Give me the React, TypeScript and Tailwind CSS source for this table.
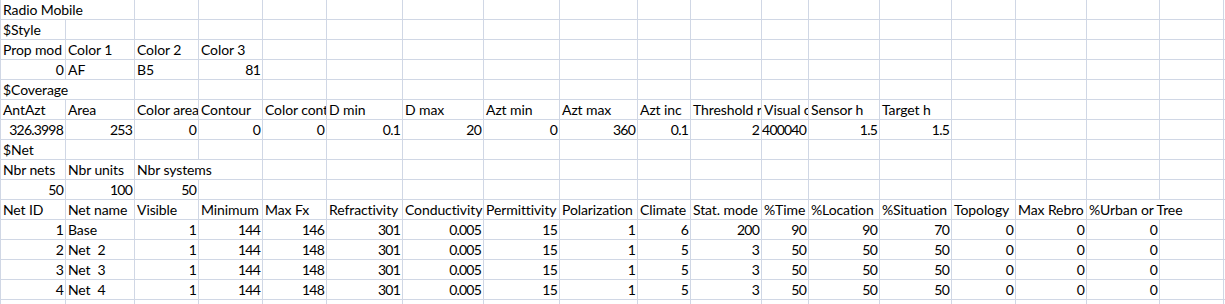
import React from "react";

// column widths incl. the 1px right gridline
const COLS = [
  "w-[65px]", "w-[69px]", "w-[64px]", "w-[64px]", "w-[64px]", "w-[76px]",
  "w-[81px]", "w-[76px]", "w-[78px]", "w-[53px]", "w-[71px]", "w-[47px]",
  "w-[71px]", "w-[72px]", "w-[64px]", "w-[71px]", "w-[73px]", "w-[64px]",
];

// cells whose text runs over the next (empty) cell
const SPANS: Record<string, string> = {
  "0-0": "w-[134px]",
  "4-0": "w-[134px]",
  "8-2": "w-[128px]",
  "10-16": "w-[137px]",
};

const ROWS: string[][] = [
  ["Radio Mobile"],
  ["$Style"],
  ["Prop mod", "Color 1", "Color 2", "Color 3"],
  ["0", "AF", "B5", "81"],
  ["$Coverage"],
  ["AntAzt", "Area", "Color area", "Contour", "Color cont", "D min", "D max", "Azt min", "Azt max", "Azt inc", "Threshold r", "Visual c", "Sensor h", "Target h"],
  ["326.3998", "253", "0", "0", "0", "0.1", "20", "0", "360", "0.1", "2", "400040", "1.5", "1.5"],
  ["$Net"],
  ["Nbr nets", "Nbr units", "Nbr systems"],
  ["50", "100", "50"],
  ["Net ID", "Net name", "Visible", "Minimum", "Max Fx", "Refractivity", "Conductivity", "Permittivity", "Polarization", "Climate", "Stat. mode", "%Time", "%Location", "%Situation", "Topology", "Max Rebro", "%Urban or Tree"],
  ["1", "Base", "1", "144", "146", "301", "0.005", "15", "1", "6", "200", "90", "90", "70", "0", "0", "0"],
  ["2", "Net  2", "1", "144", "148", "301", "0.005", "15", "1", "5", "3", "50", "50", "50", "0", "0", "0"],
  ["3", "Net  3", "1", "144", "148", "301", "0.005", "15", "1", "5", "3", "50", "50", "50", "0", "0", "0"],
  ["4", "Net  4", "1", "144", "148", "301", "0.005", "15", "1", "5", "3", "50", "50", "50", "0", "0", "0"],
  [],
];

const isNum = (s: string) => /^[\d.]+$/.test(s);

function Row({ cells, ri }: { cells: string[]; ri: number }) {
  const out: React.ReactNode[] = [];
  let c = 0;
  while (c < COLS.length) {
    const v = cells[c] ?? "";
    const span = SPANS[`${ri}-${c}`];
    out.push(
      <div
        key={c}
        className={`${span ?? COLS[c]} shrink-0 h-full border-r border-[#d0d7e5] overflow-hidden whitespace-pre ${
          isNum(v) ? "text-right tracking-[-0.8px] pr-[2px]" : "text-left tracking-[-0.1px] pl-[2px]"
        }`}
      >
        {v}
      </div>
    );
    c += span ? 2 : 1;
  }
  return (
    <div className="flex h-[20px] border-b border-[#d0d7e5] leading-[19px]">
      {out}
      <div className="flex-1" />
    </div>
  );
}

export default function App() {
  return (
    <div className="w-[1225px] h-[304px] overflow-hidden bg-white border-l border-[#d0d7e5] text-black text-[14px] font-['Lato',sans-serif]">
      {ROWS.map((r, i) => (
        <Row key={i} cells={r} ri={i} />
      ))}
    </div>
  );
}
